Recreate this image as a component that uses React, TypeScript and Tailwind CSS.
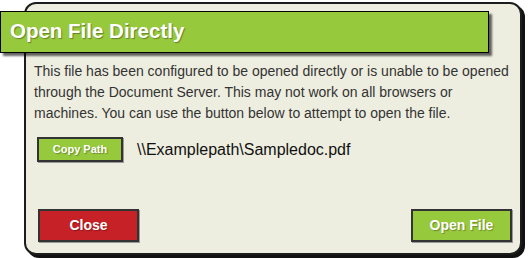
import React from 'react';

const font = { fontFamily: '"Liberation Sans", Arial, sans-serif' };

export default function App() {
  return (
    <div className="w-[528px] h-[258px] bg-white pt-[2px] pl-[24px]" style={font}>
      <div className="flex flex-col w-[498px] h-[253px] rounded-[12px] border-2 border-[#1c1c1c] bg-[#EEEEE0] shadow-[3px_3px_0_#111]">
        {/* title bar sticks out past the dialog's left edge */}
        <div className="-ml-[26px] mt-[7px] w-[489px] h-[42px] flex items-center pl-[9px] pb-[2px] bg-[#97C93C] border border-black shadow-[3px_3px_2px_rgba(0,0,0,0.6)]">
          <span className="text-white font-bold text-[20.5px] leading-none [text-shadow:1px_1px_1px_rgba(0,0,0,0.35)]">
            Open File Directly
          </span>
        </div>

        <p className="mt-[8px] pl-[8px] pr-[10px] text-[14px] leading-[21px] text-[#333]">
          This file has been configured to be opened directly or is unable to be opened through the Document Server. This may not work on all browsers or machines. You can use the button below to attempt to open the file.
        </p>

        <div className="flex items-center mt-[13px] pl-[11px]">
          <button className="w-[86px] h-[25px] bg-[#97C93C] border-2 border-[#333] shadow-[1px_1px_0_#999] text-white font-bold text-[11px] [text-shadow:1px_1px_1px_rgba(0,0,0,0.3)]">
            Copy Path
          </button>
          <span className="ml-[14px] text-[16px] text-[#111]">\\Examplepath\Sampledoc.pdf</span>
        </div>

        <div className="flex justify-between mt-auto mb-[11px] pl-[12px] pr-[8px]">
          <button className="w-[101px] h-[33px] bg-[#C62127] border-2 border-[#333] shadow-[1px_1px_0_#999] text-white font-bold text-[14px] [text-shadow:1px_1px_1px_rgba(0,0,0,0.3)]">
            Close
          </button>
          <button className="w-[101px] h-[33px] bg-[#97C93C] border-2 border-[#333] shadow-[1px_1px_0_#999] text-white font-bold text-[14px] [text-shadow:1px_1px_1px_rgba(0,0,0,0.3)]">
            Open File
          </button>
        </div>
      </div>
    </div>
  );
}
